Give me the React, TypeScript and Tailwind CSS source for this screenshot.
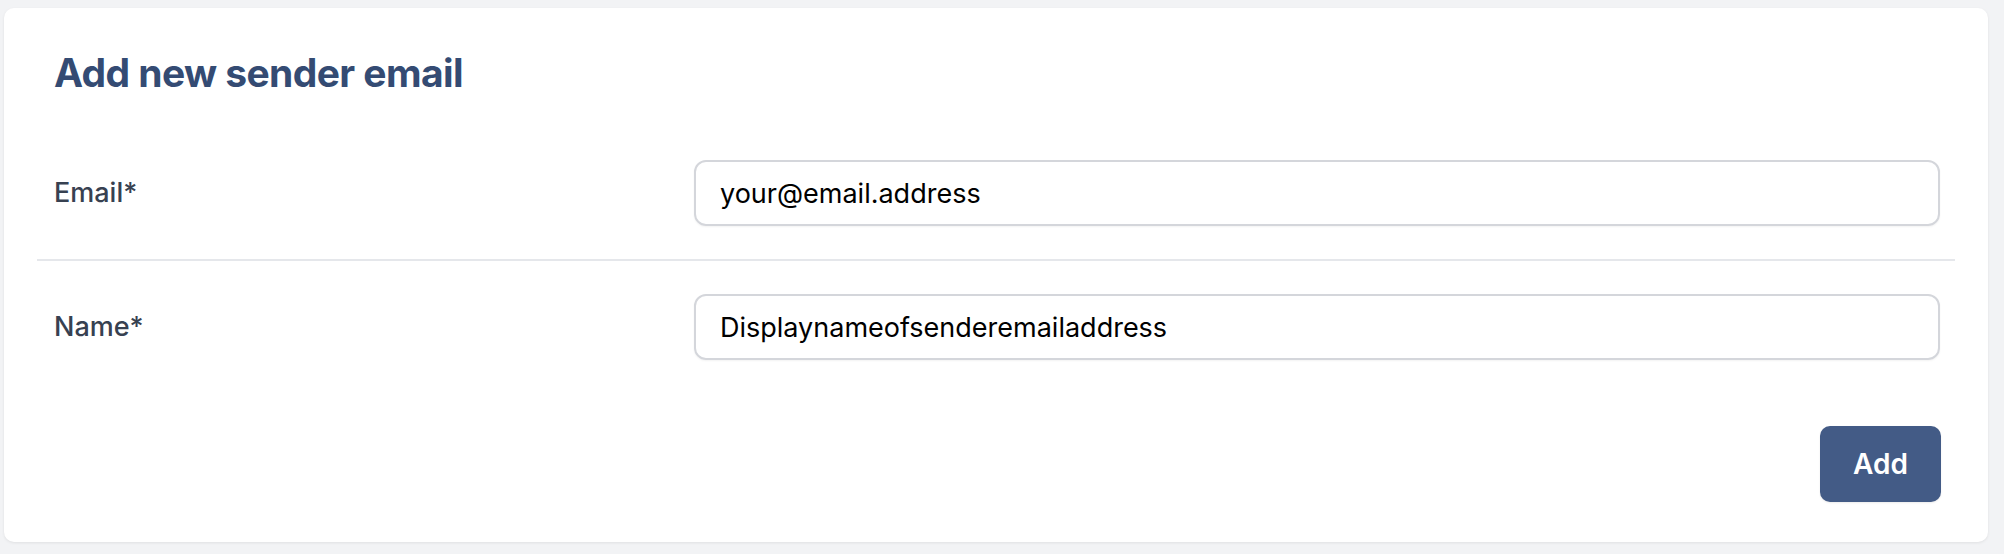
export default function App() {
  return (
    <div className="min-h-[554px] bg-[#f2f3f5] pl-[4px] pr-[16px] pt-[8px] pb-[12px] font-['Inter',sans-serif]">
      <div className="flex h-[534px] flex-col rounded-[10px] bg-white pt-[41px] shadow-[0_1px_3px_rgba(0,0,0,0.08)]">
        <h1 className="px-[50px] text-[39px] font-bold leading-[48px] tracking-[-0.6px] text-[#344b73]">
          Add new sender email
        </h1>

        <div className="mx-[33px] mt-[30px] flex flex-col">
          <div className="flex items-center border-b-2 border-[#e5e7eb] pl-[17px] pr-[15px] py-[33px]">
            <label className="w-[640px] text-[27px] font-medium text-[#374151]">Email*</label>
            <input
              type="text"
              defaultValue="your@email.address"
              className="h-[66px] flex-1 rounded-[12px] border-2 border-[#d4d6db] px-[24px] text-[27px] text-black shadow-[0_1px_2px_rgba(0,0,0,0.05)] outline-none"
            />
          </div>
          <div className="flex items-center pl-[17px] pr-[15px] py-[33px]">
            <label className="w-[640px] text-[27px] font-medium text-[#374151]">Name*</label>
            <input
              type="text"
              defaultValue="Displaynameofsenderemailaddress"
              className="h-[66px] flex-1 rounded-[12px] border-2 border-[#d4d6db] px-[24px] text-[27px] text-black shadow-[0_1px_2px_rgba(0,0,0,0.05)] outline-none"
            />
          </div>
          <div className="flex justify-end pr-[14px]">
            <button className="mt-[33px] h-[76px] w-[121px] rounded-[10px] bg-[#435b86] text-[28px] font-semibold text-white shadow-[0_1px_2px_rgba(0,0,0,0.08)]">
              Add
            </button>
          </div>
        </div>
      </div>
    </div>
  );
}
